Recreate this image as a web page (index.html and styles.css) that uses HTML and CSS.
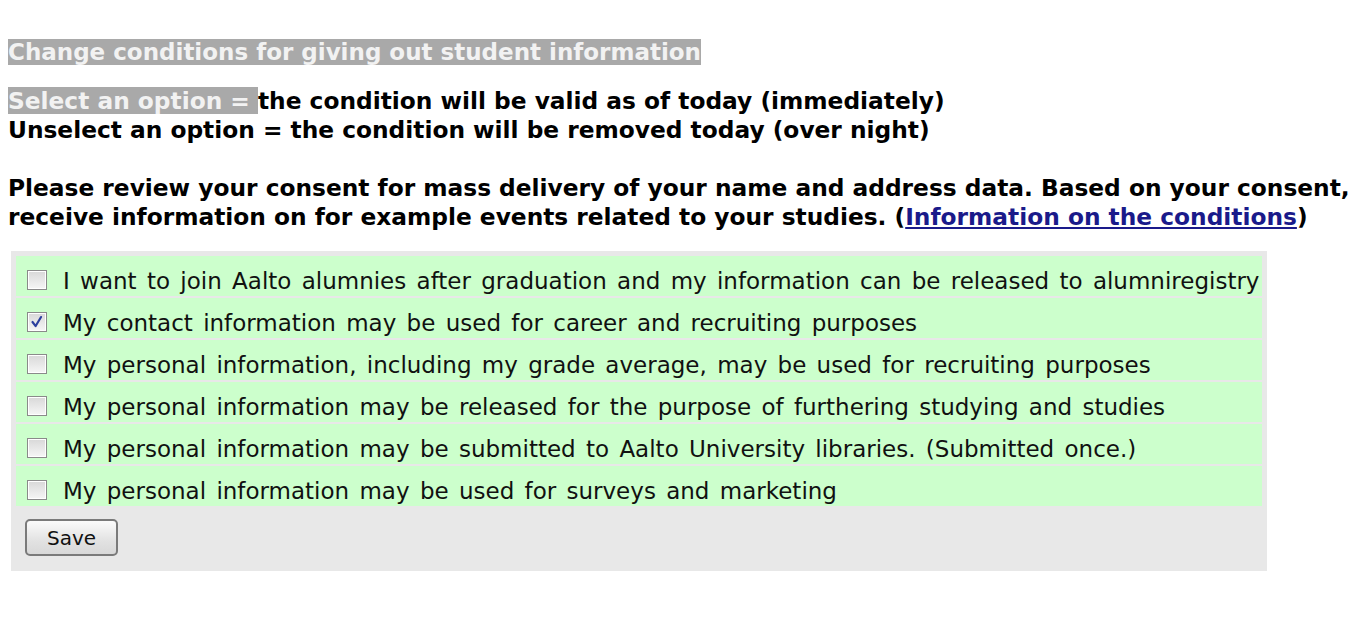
FILE: index.html
```html
<!DOCTYPE html>
<html>
<head>
<meta charset="utf-8">
<link rel="stylesheet" href="styles.css">
</head>
<body>
<div class="page">
  <h1 class="title"><span class="hl">Change conditions for giving out student information</span></h1>
  <p class="rules"><span class="hl">Select an option = </span>the condition will be valid as of today (immediately)<br>Unselect an option = the condition will be removed today (over night)</p>
  <p class="note">Please review your consent for mass delivery of your name and address data. Based on your consent,<br>receive information on for example events related to your studies. (<a href="#">Information on the conditions</a>)</p>
  <form class="box">
    <div class="rows">
      <label class="row"><span class="cb"></span><span>I want to join Aalto alumnies after graduation and my information can be released to alumniregistry</span></label>
      <label class="row"><span class="cb checked"><svg viewBox="0 0 20 20" width="18" height="18"><path d="M5 10 L8.5 14.5 L14.5 4.5" fill="none" stroke="#2b3f9e" stroke-width="2.4" stroke-linecap="round" stroke-linejoin="round"/></svg></span><span>My contact information may be used for career and recruiting purposes</span></label>
      <label class="row"><span class="cb"></span><span>My personal information, including my grade average, may be used for recruiting purposes</span></label>
      <label class="row"><span class="cb"></span><span>My personal information may be released for the purpose of furthering studying and studies</span></label>
      <label class="row"><span class="cb"></span><span>My personal information may be submitted to Aalto University libraries. (Submitted once.)</span></label>
      <label class="row"><span class="cb"></span><span>My personal information may be used for surveys and marketing</span></label>
    </div>
    <div class="actions"><button type="button" class="btn">Save</button></div>
  </form>
</div>
</body>
</html>
```
FILE: styles.css
```css
html, body { margin: 0; padding: 0; background: #fff; }
body { font-family: "DejaVu Sans", Verdana, sans-serif; color: #000; overflow: hidden; }
.page { padding: 38px 0 0 8px; width: 1500px; }
.title { margin: 0; font-size: 23px; font-weight: bold; line-height: 28px; }
.hl { background: #a9a9a9; color: #f2f2f2; }
.rules { margin: 20px 0 0; font-size: 23.3px; font-weight: bold; line-height: 29px; white-space: nowrap; }
.note { margin: 29px 0 0; font-size: 23.3px; font-weight: bold; line-height: 29px; white-space: nowrap; }
.note a { color: #1a1a8a; text-decoration: underline; }
.box { margin: 20px 0 0 3px; width: 1256px; background: #e8e8e8; padding: 5px 5px 15px; box-sizing: border-box; }
.rows { display: flex; flex-direction: column; gap: 2px; }
.row { display: flex; align-items: center; height: 40px; padding-top: 9px; box-sizing: border-box; background: #ccffcc; font-size: 23px; word-spacing: 3px; color: #111; white-space: nowrap; }
.cb { width: 18px; height: 18px; margin: -2px 16px 0 11px; border: 1px solid #8a8a8a; background: linear-gradient(#d8d8d8, #f6f6f6); display: flex; align-items: center; justify-content: center; flex: none; box-shadow: inset 0 0 0 1px #fff; }
.actions { padding-top: 13px; }
.btn { margin-left: 9px; width: 93px; height: 37px; border: 2px solid #7a7a7a; border-radius: 5px; background: linear-gradient(#fbfbfb, #e2e2e2 60%, #d8d8d8); font-family: "DejaVu Sans", Verdana, sans-serif; font-size: 20px; color: #111; padding: 0; }
```
